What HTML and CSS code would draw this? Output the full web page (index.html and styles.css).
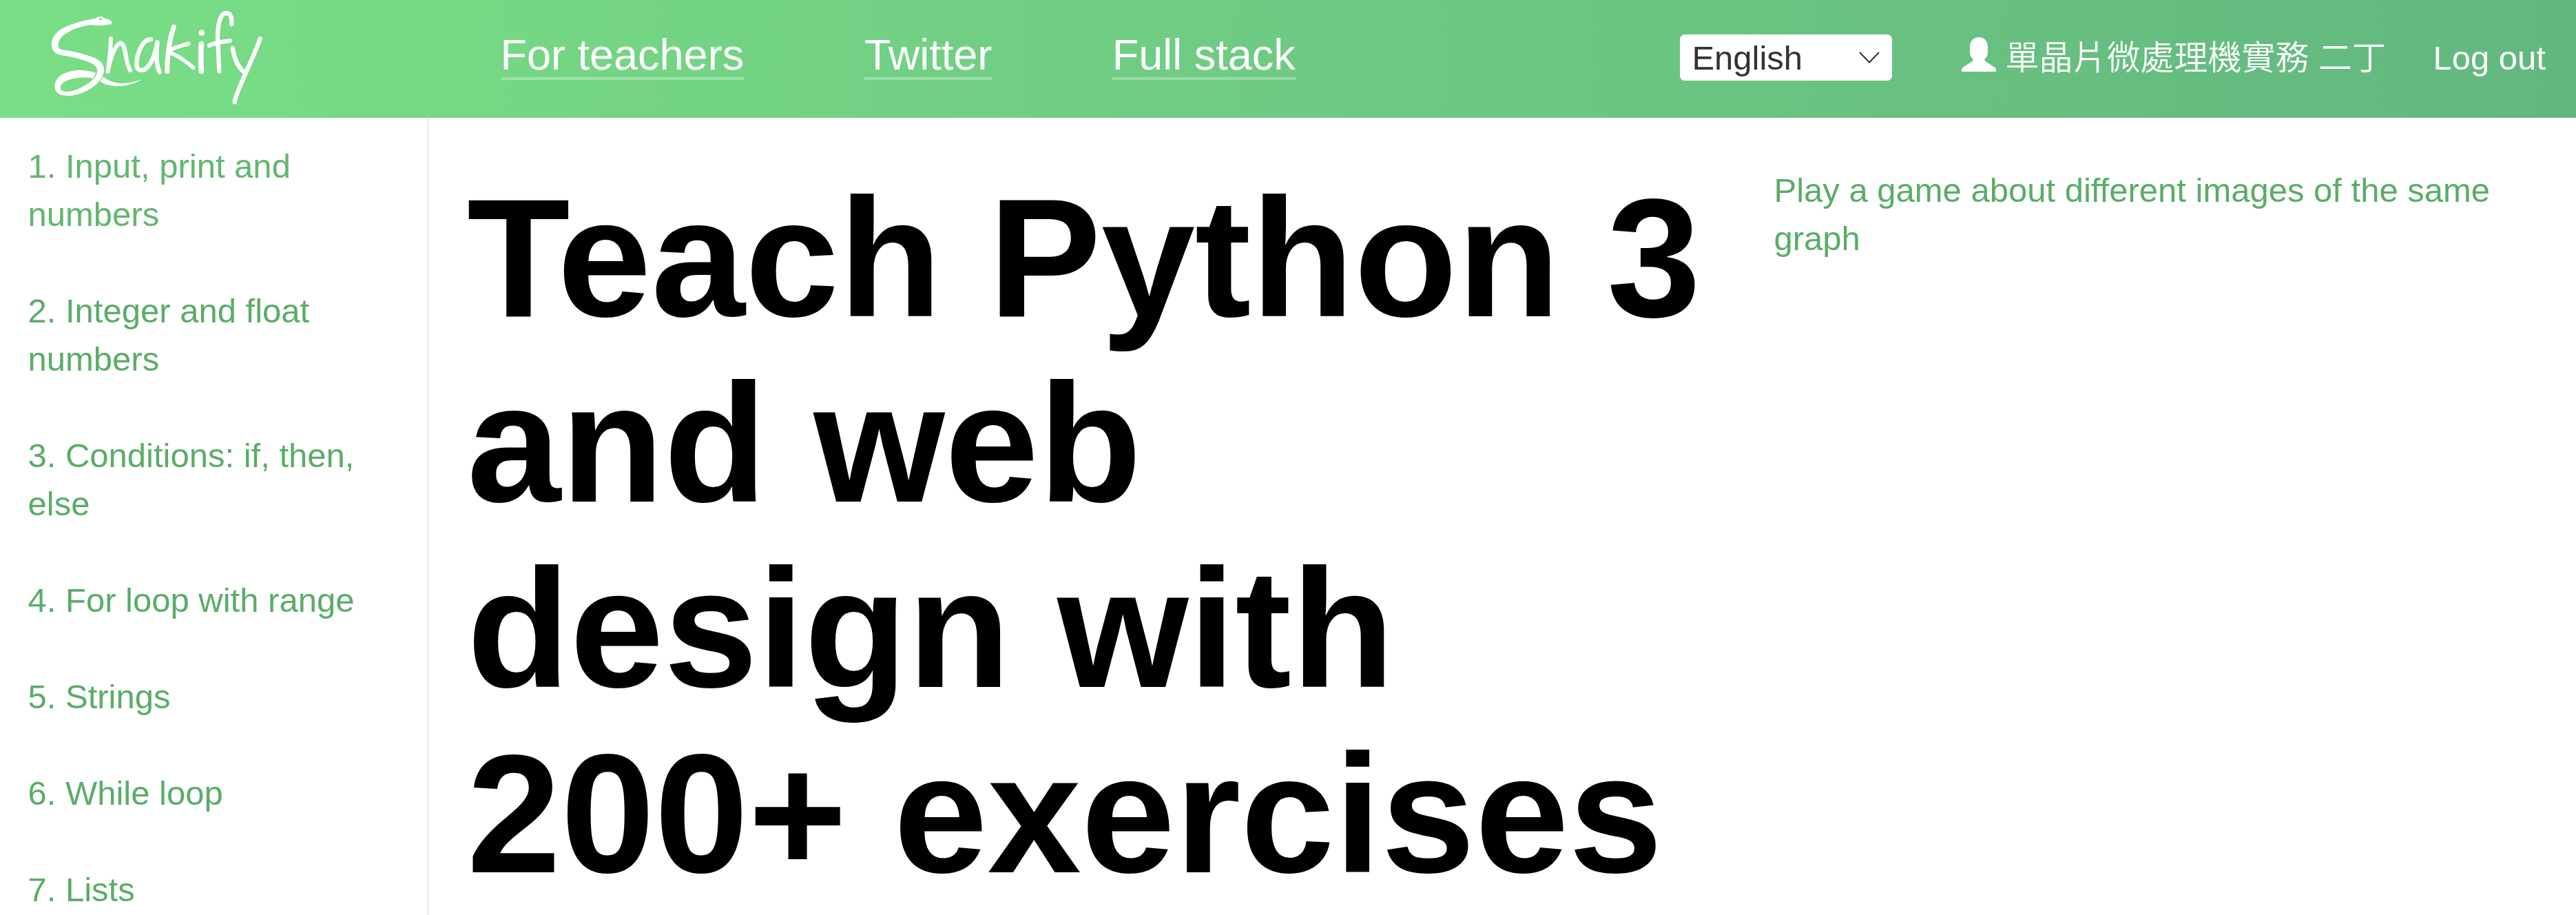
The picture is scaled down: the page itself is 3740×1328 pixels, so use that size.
FILE: index.html
```html
<!DOCTYPE html>
<html lang="en">
<head>
<meta charset="utf-8">
<title>Snakify</title>
<link rel="stylesheet" href="styles.css">
</head>
<body>
<header class="topbar">
  <a class="logo" aria-label="Snakify">
    <svg width="320" height="160" viewBox="210 30 960 480" fill="none" stroke="#fff" stroke-linecap="round" stroke-linejoin="round">
      <path fill="#fff" stroke="none" fill-rule="evenodd" d="M415 80C424 73 435 70 444 73C450 75 452 80 458 82C472 82 484 88 487 97C487 104 484 107 478 107C460 107 450 111 430 111C412 112 402 108 391 109C330 118 265 148 255 185C252 203 254 213 272 217C320 223 362 234 402 248C436 260 453 278 453 307C450 350 396 404 312 416C290 418 270 417 256 408C238 396 236 377 241 359C252 324 302 304 352 305C378 306 400 312 418 318L404 341C377 335 336 336 305 346C278 355 262 367 263 382C265 396 277 400 296 399C340 396 405 358 420 325C428 304 423 290 405 279C360 255 306 247 262 239C234 233 224 216 225 190C228 133 291 103 415 80ZM432 80V87H446C443 81 438 79 432 80Z"/>
      <path fill="#fff" stroke="none" d="M450 334C480 360 530 378 618 345C572 377 482 388 436 355Z"/>
      <path stroke-width="18" d="M483 167C482 215 476 262 470 312C476 262 500 198 523 187C552 190 542 265 567 306"/>
      <path stroke-width="19" d="M657 171C620 172 594 235 595 284C597 304 609 309 630 303C659 283 676 236 685 184C682 230 678 280 695 313"/>
      <path stroke-width="21" d="M757 117C737 174 729 240 728 311"/>
      <path stroke-width="17" d="M741 216Q778 202 821 190M741 229C780 245 810 266 842 295"/>
      <path stroke-width="23" d="M877 191Q873 240 877 310"/>
      <circle cx="878" cy="143" r="13" fill="#fff" stroke="none"/>
      <path stroke-width="19" d="M1009 105C1010 75 1004 57 987 57C948 57 945 150 950 210L955 310M912 198C940 184 973 183 1002 177"/>
      <path stroke-width="19" d="M1013 210C1020 254 1038 292 1059 310M1133 168C1105 253 1022 410 1022 445"/>
    </svg>
  </a>
  <nav class="menu">
    <a class="menu-link">For teachers</a>
    <a class="menu-link">Twitter</a>
    <a class="menu-link">Full stack</a>
  </nav>
  <div class="account">
    <div class="language">
      <span>English</span>
      <svg width="30" height="17" viewBox="0 0 30 17" fill="none" stroke="#333" stroke-width="2"><path d="M1 1L15 15.5L29 1"/></svg>
    </div>
    <div class="user">
      <svg width="50" height="50" viewBox="0 0 50 50" fill="#fff"><path d="M25 0C16 0 12 7 12 14V23C12 27 14 29 16 31C17 34 16 35 14 36L3 43C0 45 0 46 0 50H50C50 46 50 45 47 43L36 36C33 34 33 33 34 31C37 28 38 26 38 22V14C38 7 34 0 25 0Z"/></svg>
      <span>單晶片微處理機實務 二丁</span>
    </div>
    <a class="logout">Log out</a>
  </div>
</header>
<main class="page">
  <aside class="lessons">
    <a class="lesson lesson-active">1. Input, print and numbers</a>
    <a class="lesson">2. Integer and float numbers</a>
    <a class="lesson">3. Conditions: if, then, else</a>
    <a class="lesson">4. For loop with range</a>
    <a class="lesson">5. Strings</a>
    <a class="lesson">6. While loop</a>
    <a class="lesson">7. Lists</a>
  </aside>
  <section class="intro"><h1 class="headline">Teach Python 3 and web design with 200+ exercises</h1></section>
  <aside class="promo"><a>Play a game about different images of the same graph</a></aside>
</main>
</body>
</html>
```
FILE: styles.css
```css
* { box-sizing: border-box; }
html, body { height: 1328px; overflow: hidden; }
body {
  margin: 0;
  display: flex;
  flex-direction: column;
  background: #fff;
  font: 49px/70px "Liberation Sans", Arial, "Noto Sans CJK TC", sans-serif;
}
.topbar {
  flex: none;
  height: 171px;
  display: flex;
  align-items: flex-start;
  color: #fff;
  background: linear-gradient(90deg, #7ade86, #62b77f);
}
.logo { flex: none; width: 726.5px; padding: 10px 0 0 70px; }
.logo svg { display: block; }
.menu { display: flex; gap: 174.5px; padding-top: 43px; }
.menu-link {
  height: 73px;
  font-size: 63px;
  line-height: 72px;
  white-space: nowrap;
  border-bottom: 4px solid rgba(255, 255, 255, .3);
}
.account { margin-left: auto; padding-right: 44px; display: flex; align-items: flex-start; white-space: nowrap; }
.language {
  width: 308px;
  height: 67px;
  margin: 50px 101px 0 0;
  padding: 0 18px 0 17px;
  display: flex;
  align-items: center;
  justify-content: space-between;
  border-radius: 7px;
  background: #fff;
  color: #333;
}
.user { display: flex; gap: 13px; margin: 49px 68.5px 0 0; }
.user svg { flex: none; margin-top: 5px; }
.user span { font-weight: 350; }
.logout { margin-top: 49px; }
.page { flex: 1; min-height: 0; display: flex; color: #5aad68; }
.lessons {
  flex: none;
  width: 623px;
  padding: 35px 80px 0 40.5px;
  display: flex;
  flex-direction: column;
  gap: 70px;
  border-right: 3px solid #eee;
}
.lesson-active { color: #62b770; }
.intro { flex: none; width: 1952.5px; padding: 68.5px 80px 0 55px; }
.headline { margin: 0; font-size: 245px; line-height: 269px; letter-spacing: -.1px; color: #000; }
.promo { flex: 1; padding: 70px 110px 0 0; }
```
